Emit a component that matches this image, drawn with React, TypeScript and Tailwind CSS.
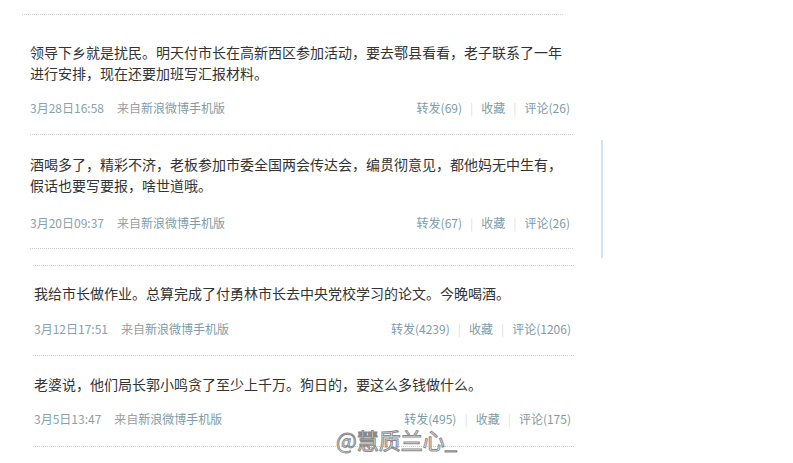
import React from 'react'

interface Post {
  lines: string[]
  date: string
  forward: number
  comment: number
  pt: string
  mt: string
  pb: string
}

const firstGroup: Post[] = [
  {
    lines: ['领导下乡就是扰民。明天付市长在高新西区参加活动，要去鄠县看看，老子联系了一年', '进行安排，现在还要加班写汇报材料。'],
    date: '3月28日16:58',
    forward: 69,
    comment: 26,
    pt: 'pt-[27px]',
    mt: 'mt-[16px]',
    pb: 'pb-[18px]',
  },
  {
    lines: ['酒喝多了，精彩不济，老板参加市委全国两会传达会，编贯彻意见，都他妈无中生有，', '假话也要写要报，啥世道哦。'],
    date: '3月20日09:37',
    forward: 67,
    comment: 26,
    pt: 'pt-[19px]',
    mt: 'mt-[19px]',
    pb: 'pb-[17px]',
  },
]

const secondGroup: Post[] = [
  {
    lines: ['我给市长做作业。总算完成了付勇林市长去中央党校学习的论文。今晚喝酒。'],
    date: '3月12日17:51',
    forward: 4239,
    comment: 1206,
    pt: 'pt-[17px]',
    mt: 'mt-[17px]',
    pb: 'pb-[18px]',
  },
  {
    lines: ['老婆说，他们局长郭小鸣贪了至少上千万。狗日的，要这么多钱做什么。'],
    date: '3月5日13:47',
    forward: 495,
    comment: 175,
    pt: 'pt-[18px]',
    mt: 'mt-[16px]',
    pb: 'pb-[19px]',
  },
]

function Divider() {
  return <div className="border-t border-dotted border-[#cdcdcd]" />
}

function PostItem({ post, indent }: { post: Post; indent: string }) {
  return (
    <div className={`${post.pt} ${post.pb}`}>
      <div className={`${indent} text-[14px] leading-[21px] text-[#333]`}>
        {post.lines.map((l) => (
          <p key={l} className="whitespace-nowrap">{l}</p>
        ))}
      </div>
      <div className={`${post.mt} ${indent} flex items-center justify-between pr-[3px] text-[12px] leading-[16px]`}>
        <div className="flex items-center">
          <span className="text-[#86a2ab]">{post.date}</span>
          <span className="ml-[13px] text-[#a0a0a0]">来自</span>
          <span className="text-[#7d9ca6]">新浪微博手机版</span>
        </div>
        <div className="flex items-center text-[#7d9ca6]">
          <span>转发({post.forward})</span>
          <span className="px-[8px] text-[#e0e0e0]">|</span>
          <span>收藏</span>
          <span className="px-[8px] text-[#e0e0e0]">|</span>
          <span>评论({post.comment})</span>
        </div>
      </div>
    </div>
  )
}

export default function App() {
  return (
    <div className="relative w-[793px] h-[463px] overflow-hidden bg-white font-['Noto_Sans_CJK_SC','Noto_Sans',sans-serif]">
      <div className="flex">
        <div className="w-[600px]">
          <div className="pt-[14px]">
            <div className="ml-[22px] w-[541px]">
              <Divider />
            </div>
            <div className="ml-[30px] w-[543px]">
              {firstGroup.map((p) => (
                <div key={p.date}>
                  <PostItem post={p} indent="" />
                  <Divider />
                </div>
              ))}
            </div>
          </div>
          <div className="mt-[16px] ml-[33px] w-[541px]">
            <Divider />
            {secondGroup.map((p) => (
              <div key={p.date}>
                <PostItem post={p} indent="pl-[1px]" />
                <Divider />
              </div>
            ))}
          </div>
        </div>
        <div className="pt-[140px] pl-[1px]">
          <div className="w-[2px] h-[118px] bg-[#cfe4f4]" />
        </div>
      </div>

      {/* watermark */}
      <div className="absolute left-[336px] top-[428px] text-[22px] leading-[22px] text-white [-webkit-text-stroke:1px_#8a8a8a]">
        @慧质兰心_
      </div>
    </div>
  )
}
